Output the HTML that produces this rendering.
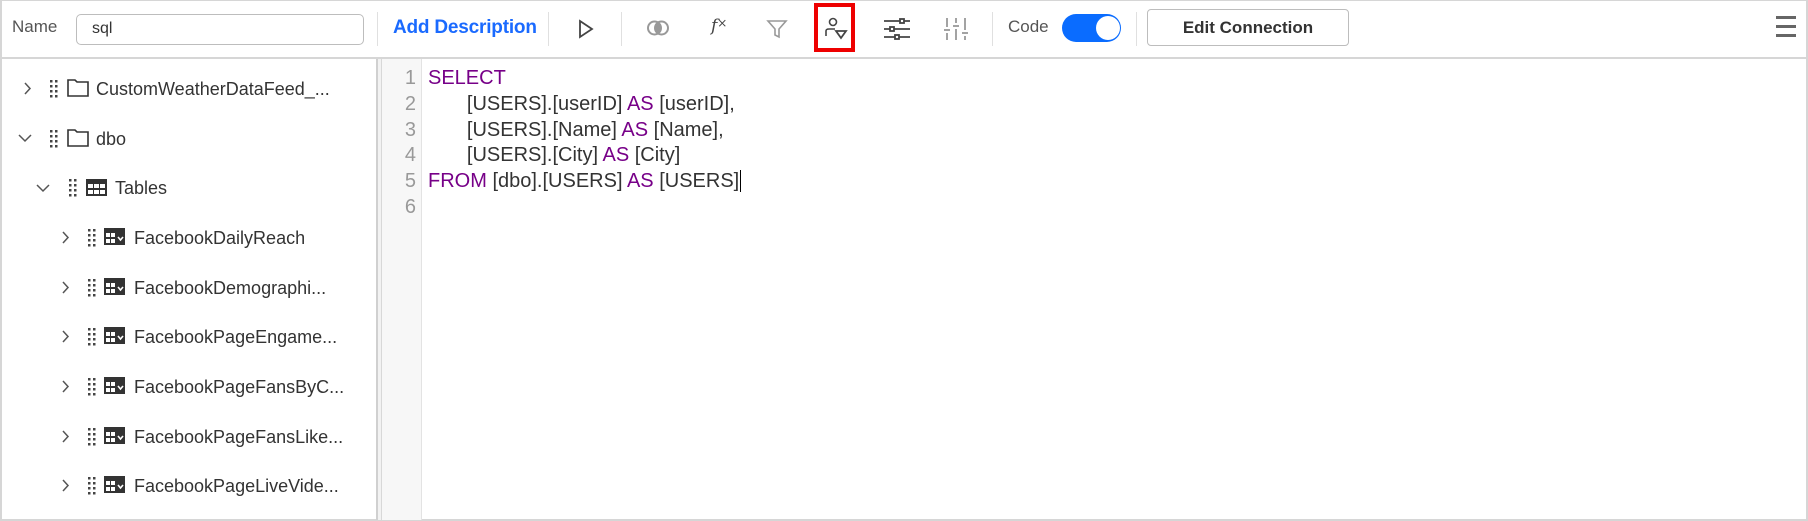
<!DOCTYPE html>
<html><head><meta charset="utf-8"><style>
*{margin:0;padding:0;box-sizing:border-box}
body{width:1808px;height:521px;background:#fff;font-family:"Liberation Sans",sans-serif;position:relative;overflow:hidden;color:#333}
.a{position:absolute}
.vd{position:absolute;top:12px;width:1px;height:34px;background:#e0e0e0}
.row{position:absolute;height:30px;display:flex;align-items:center;font-size:18px;color:#333;white-space:nowrap}
.code{position:absolute;left:428px;font-size:20px;line-height:25.8px;color:#333;white-space:pre;top:66px}
.k{color:#770088}
.ln{position:absolute;left:382px;width:34px;text-align:right;font-size:20px;line-height:25.8px;color:#999;top:66px}
</style></head><body>
<div class="a" style="left:0;top:0;width:1808px;height:521px;border:2px solid #d6d6d6;border-top:1px solid #d6d6d6"></div>
<div class="a" style="left:0;top:57px;width:1808px;height:2px;background:#d6d6d6"></div>
<div class="a" style="left:12px;top:17px;font-size:17px;color:#555">Name</div>
<div class="a" style="left:76px;top:14px;width:288px;height:31px;border:1px solid #bdbdbd;border-radius:5px;font-size:16px;padding:5px 0 0 15px;color:#333">sql</div>
<div class="vd" style="left:377px"></div>
<div class="a" style="left:393px;top:17px;font-size:19px;color:#1a6aff;font-weight:bold;letter-spacing:-0.2px">Add Description</div>
<div class="vd" style="left:548px"></div>
<svg class="a" style="left:577px;top:18px" width="18" height="22" viewBox="0 0 18 22"><path d="M3 3 L15 11 L3 19 Z" fill="none" stroke="#444" stroke-width="1.8"/></svg>
<div class="vd" style="left:621px"></div>
<svg class="a" style="left:646px;top:19px" width="24" height="18" viewBox="0 0 24 18"><circle cx="8.5" cy="9" r="6.5" fill="none" stroke="#999" stroke-width="2"/><circle cx="15.5" cy="9" r="6.5" fill="none" stroke="#999" stroke-width="2"/><path d="M12 4 A6.5 6.5 0 0 1 12 14 A6.5 6.5 0 0 1 12 4Z" fill="#999"/></svg>
<div class="a" style="left:711px;top:16px;font-size:17px;color:#444;font-family:'DejaVu Serif',serif;font-style:italic">f<span style="font-size:12px;font-style:normal;vertical-align:4px">×</span></div>
<svg class="a" style="left:766px;top:18px" width="22" height="22" viewBox="0 0 22 22"><path d="M2 3 H20 L13 11 V19 L9 17 V11 Z" fill="none" stroke="#999" stroke-width="1.6"/></svg>
<div class="a" style="left:814px;top:3px;width:41px;height:49px;border:4px solid #ee0000"></div>
<svg class="a" style="left:824px;top:16px" width="24" height="26" viewBox="0 0 24 26"><circle cx="9" cy="6" r="3.5" fill="none" stroke="#444" stroke-width="1.6"/><path d="M2 20 V15 Q2 13 5 13 H11" fill="none" stroke="#444" stroke-width="1.6"/><path d="M12 15 H22 L17 22 Z" fill="none" stroke="#444" stroke-width="1.8"/></svg>
<svg class="a" style="left:883px;top:17px" width="28" height="24" viewBox="0 0 28 24"><g stroke="#444" stroke-width="1.8" fill="#fff"><line x1="1" y1="4" x2="27" y2="4"/><line x1="1" y1="12" x2="27" y2="12"/><line x1="1" y1="20" x2="27" y2="20"/><rect x="17" y="2" width="4" height="4"/><rect x="7" y="10" width="4" height="4"/><rect x="12" y="18" width="4" height="4"/></g></svg>
<svg class="a" style="left:943px;top:16px" width="26" height="26" viewBox="0 0 26 26"><g stroke="#999" stroke-width="1.8"><line x1="4" y1="2" x2="4" y2="11"/><line x1="4" y1="17" x2="4" y2="24"/><line x1="1" y1="14" x2="7" y2="14"/><line x1="13" y1="2" x2="13" y2="7"/><line x1="13" y1="13" x2="13" y2="24"/><line x1="10" y1="10" x2="16" y2="10"/><line x1="22" y1="2" x2="22" y2="14"/><line x1="22" y1="20" x2="22" y2="24"/><line x1="19" y1="17" x2="25" y2="17"/></g></svg>
<div class="vd" style="left:992px"></div>
<div class="a" style="left:1008px;top:17px;font-size:17px;color:#555">Code</div>
<div class="a" style="left:1062px;top:14px;width:59px;height:28px;border-radius:14px;background:#0a6cff"></div>
<div class="a" style="left:1096px;top:16px;width:24px;height:24px;border-radius:12px;background:#fff"></div>
<div class="vd" style="left:1136px"></div>
<div class="a" style="left:1147px;top:9px;width:202px;height:37px;border:1px solid #bdbdbd;border-radius:4px;font-size:17px;font-weight:bold;color:#333;text-align:center;line-height:35px">Edit Connection</div>
<div class="a" style="left:1776px;top:16px;width:20px;height:3px;background:#666"></div>
<div class="a" style="left:1776px;top:25px;width:20px;height:3px;background:#666"></div>
<div class="a" style="left:1776px;top:34px;width:20px;height:3px;background:#666"></div>

<div class="a" style="left:376px;top:59px;width:6px;height:461px;background:#f2f2f2;border-left:2px solid #d0d0d0;border-right:1px solid #d8d8d8"></div>
<div class="a" style="left:382px;top:59px;width:40px;height:461px;background:#f7f7f7;border-right:1px solid #e3e3e3"></div>

<svg width="0" height="0" style="position:absolute"><defs>
<g id="ch"><path d="M1 1 L6 6.5 L1 12" fill="none" stroke="#555" stroke-width="1.5"/></g>
<g id="cd"><path d="M1 1 L7 7 L13 1" fill="none" stroke="#555" stroke-width="1.5"/></g>
<g id="dr" fill="#444"><rect x="0" y="0" width="2.5" height="2.5"/><rect x="5" y="0" width="2.5" height="2.5"/><rect x="0" y="5" width="2.5" height="2.5"/><rect x="5" y="5" width="2.5" height="2.5"/><rect x="0" y="10" width="2.5" height="2.5"/><rect x="5" y="10" width="2.5" height="2.5"/><rect x="0" y="15" width="2.5" height="2.5"/><rect x="5" y="15" width="2.5" height="2.5"/></g>
<g id="fo"><path d="M1 3 H8 L10 5 H21 V19 H1 Z" fill="none" stroke="#333" stroke-width="1.6"/></g>
<g id="tb"><rect x="0" y="0" width="21" height="17" fill="#333"/><g fill="#fff"><rect x="2" y="5" width="5" height="4"/><rect x="8" y="5" width="5" height="4"/><rect x="14" y="5" width="5" height="4"/><rect x="2" y="11" width="5" height="4"/><rect x="8" y="11" width="5" height="4"/><rect x="14" y="11" width="5" height="4"/></g></g>
<g id="tc"><rect x="0" y="0" width="21" height="17" fill="#333"/><g fill="#fff"><rect x="2" y="5" width="4" height="4"/><rect x="7" y="5" width="4" height="4"/><rect x="2" y="11" width="4" height="4"/><rect x="7" y="11" width="4" height="4"/></g><path d="M14 9 L16.5 12 L19 9" fill="none" stroke="#fff" stroke-width="1.6"/></g>
</defs></svg>

<svg class="a" style="left:24px;top:82px" width="10" height="14"><use href="#ch"/></svg>
<svg class="a" style="left:50px;top:80px" width="8" height="18"><use href="#dr"/></svg>
<svg class="a" style="left:67px;top:77px" width="23" height="21"><use href="#fo"/></svg>
<div class="row" style="left:96px;top:74px">CustomWeatherDataFeed_...</div>

<svg class="a" style="left:18px;top:134px" width="15" height="9"><use href="#cd"/></svg>
<svg class="a" style="left:50px;top:130px" width="8" height="18"><use href="#dr"/></svg>
<svg class="a" style="left:67px;top:127px" width="23" height="21"><use href="#fo"/></svg>
<div class="row" style="left:96px;top:124px">dbo</div>

<svg class="a" style="left:36px;top:184px" width="15" height="9"><use href="#cd"/></svg>
<svg class="a" style="left:69px;top:179px" width="8" height="18"><use href="#dr"/></svg>
<svg class="a" style="left:86px;top:179px" width="21" height="17"><use href="#tb"/></svg>
<div class="row" style="left:115px;top:173px">Tables</div>

<svg class="a" style="left:62px;top:231px" width="10" height="14"><use href="#ch"/></svg>
<svg class="a" style="left:88px;top:229px" width="8" height="18"><use href="#dr"/></svg>
<svg class="a" style="left:104px;top:228px" width="21" height="17"><use href="#tc"/></svg>
<div class="row" style="left:134px;top:223px">FacebookDailyReach</div>

<svg class="a" style="left:62px;top:281px" width="10" height="14"><use href="#ch"/></svg>
<svg class="a" style="left:88px;top:279px" width="8" height="18"><use href="#dr"/></svg>
<svg class="a" style="left:104px;top:278px" width="21" height="17"><use href="#tc"/></svg>
<div class="row" style="left:134px;top:273px">FacebookDemographi...</div>

<svg class="a" style="left:62px;top:330px" width="10" height="14"><use href="#ch"/></svg>
<svg class="a" style="left:88px;top:328px" width="8" height="18"><use href="#dr"/></svg>
<svg class="a" style="left:104px;top:327px" width="21" height="17"><use href="#tc"/></svg>
<div class="row" style="left:134px;top:322px">FacebookPageEngame...</div>

<svg class="a" style="left:62px;top:380px" width="10" height="14"><use href="#ch"/></svg>
<svg class="a" style="left:88px;top:378px" width="8" height="18"><use href="#dr"/></svg>
<svg class="a" style="left:104px;top:377px" width="21" height="17"><use href="#tc"/></svg>
<div class="row" style="left:134px;top:372px">FacebookPageFansByC...</div>

<svg class="a" style="left:62px;top:430px" width="10" height="14"><use href="#ch"/></svg>
<svg class="a" style="left:88px;top:428px" width="8" height="18"><use href="#dr"/></svg>
<svg class="a" style="left:104px;top:427px" width="21" height="17"><use href="#tc"/></svg>
<div class="row" style="left:134px;top:422px">FacebookPageFansLike...</div>

<svg class="a" style="left:62px;top:479px" width="10" height="14"><use href="#ch"/></svg>
<svg class="a" style="left:88px;top:477px" width="8" height="18"><use href="#dr"/></svg>
<svg class="a" style="left:104px;top:476px" width="21" height="17"><use href="#tc"/></svg>
<div class="row" style="left:134px;top:471px">FacebookPageLiveVide...</div>

<div class="ln">1<br>2<br>3<br>4<br>5<br>6</div>
<div class="code"><span class="k">SELECT</span>
       [USERS].[userID] <span class="k">AS</span> [userID],
       [USERS].[Name] <span class="k">AS</span> [Name],
       [USERS].[City] <span class="k">AS</span> [City]
<span class="k">FROM</span> [dbo].[USERS] <span class="k">AS</span> [USERS]<span style="border-left:1.5px solid #000;margin-left:1px"></span>
</div>
</body></html>
